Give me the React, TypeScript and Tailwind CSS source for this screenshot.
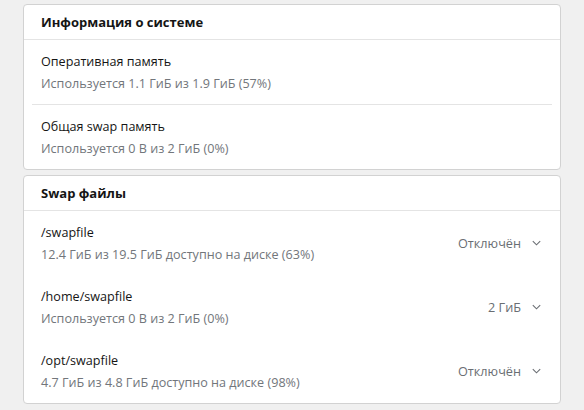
import React from "react";

const Chevron = () => (
  <svg width="9" height="6" viewBox="0 0 9 6" className="ml-[11px]" fill="none">
    <path d="M0.8 1.2l3.7 3.6 3.7-3.6" stroke="#6a6e73" strokeWidth="1.1" />
  </svg>
);

const Row = ({ label, sub, right }: { label: string; sub: string; right?: string }) => (
  <div className="flex items-center h-16 pl-[17px] pr-[19px]">
    <div className="flex-1 pt-[2px]">
      <div className="text-[12.6px] leading-[18px] text-[#151515]">{label}</div>
      <div className="mt-1 text-[12.6px] leading-[18px] text-[#72767b]">{sub}</div>
    </div>
    {right && (
      <div className="flex items-center text-[12.7px] leading-[18px] text-[#6a6e73]">
        {right}
        <Chevron />
      </div>
    )}
  </div>
);

export default function App() {
  return (
    <div
      className="w-[584px] h-[410px] bg-[#f0f0f0] pt-1 pl-[23px]"
      style={{ fontFamily: '"Open Sans", sans-serif' }}
    >
      <div className="w-[538px] bg-white border border-[#d2d2d2] rounded-[4px]">
        <div className="h-[35px] pl-[17px] pt-2 text-[13px] leading-[18px] font-bold text-[#151515] border-b border-[#e4e4e4]">
          Информация о системе
        </div>
        <Row label="Оперативная память" sub="Используется 1.1 ГиБ из 1.9 ГиБ (57%)" />
        <div className="mx-2 h-px bg-[#e4e4e4]" />
        <Row label="Общая swap память" sub="Используется 0 B из 2 ГиБ (0%)" />
      </div>
      <div className="mt-[5px] w-[538px] bg-white border border-[#d2d2d2] rounded-[4px]">
        <div className="h-[35px] pl-[17px] pt-2 text-[13px] leading-[18px] font-bold text-[#151515] border-b border-[#e4e4e4]">
          Swap файлы
        </div>
        <Row label="/swapfile" sub="12.4 ГиБ из 19.5 ГиБ доступно на диске (63%)" right="Отключён" />
        <Row label="/home/swapfile" sub="Используется 0 B из 2 ГиБ (0%)" right="2 ГиБ" />
        <Row label="/opt/swapfile" sub="4.7 ГиБ из 4.8 ГиБ доступно на диске (98%)" right="Отключён" />
      </div>
    </div>
  );
}
